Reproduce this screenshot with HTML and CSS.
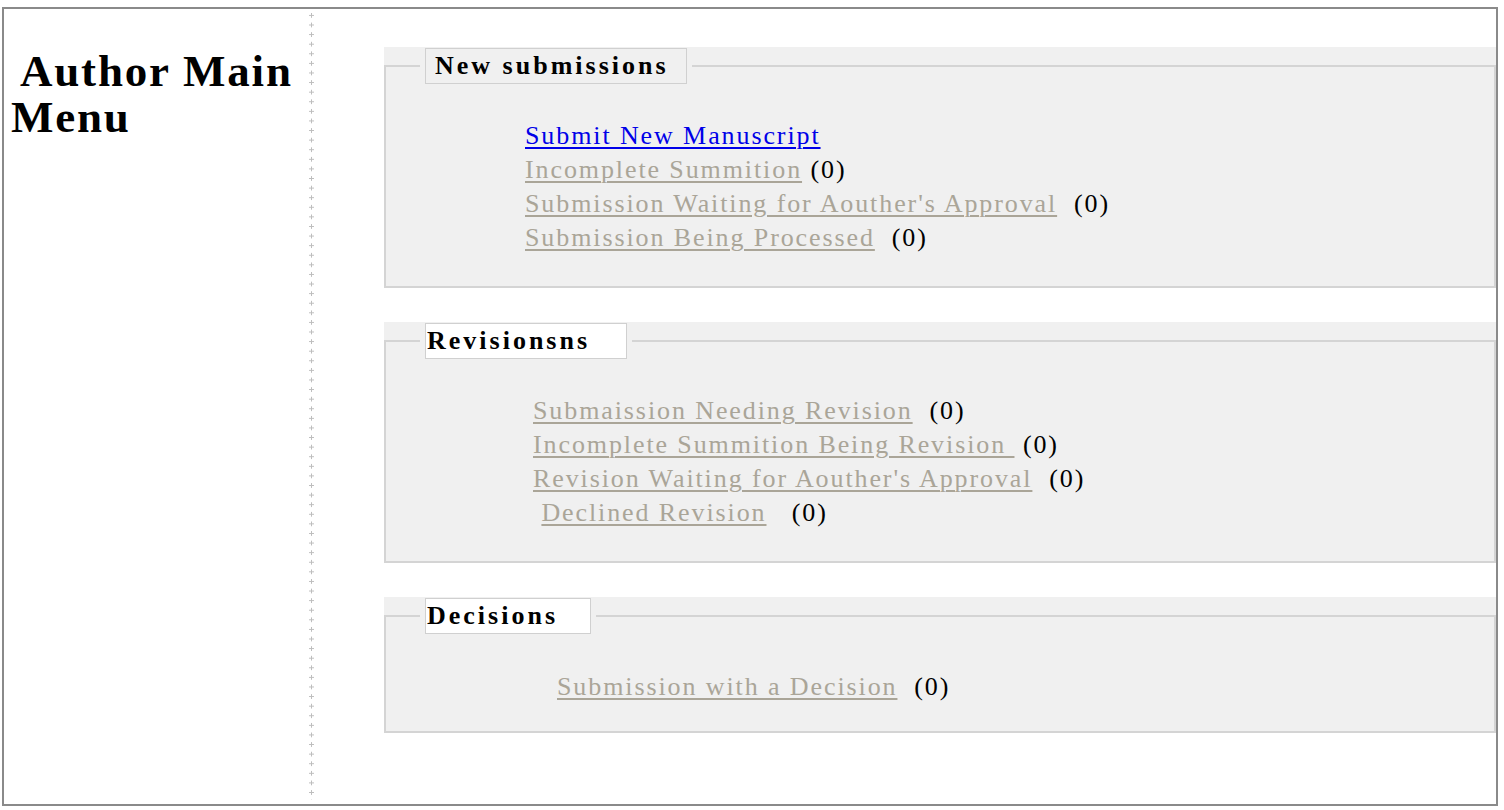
FILE: index.html
```html
<!DOCTYPE html>
<html lang="en">
<head>
<meta charset="utf-8">
<title>Author Main Menu</title>
<link rel="stylesheet" href="styles.css">
</head>
<body>
<div class="frame">
  <aside class="side">
    <h1 class="title"><span class="title-indent">Author Main</span><br>Menu</h1>
  </aside>
  <div class="divider"></div>
  <main class="main">
    <section class="group">
      <fieldset class="box">
        <legend class="legend"><span class="legend-label legend-label--first">New submissions</span></legend>
        <ul class="links links--new">
          <li><a class="link link--active" href="#">Submit New Manuscript</a></li>
          <li><a class="link" href="#">Incomplete Summition</a> <span class="count">(0)</span></li>
          <li><a class="link" href="#">Submission Waiting for Aouther's Approval</a>&nbsp; <span class="count">(0)</span></li>
          <li><a class="link" href="#">Submission Being Processed</a>&nbsp; <span class="count">(0)</span></li>
        </ul>
      </fieldset>
    </section>
    <section class="group">
      <fieldset class="box">
        <legend class="legend"><span class="legend-label legend-label--revisions">Revisionsns</span></legend>
        <ul class="links links--revisions">
          <li><a class="link" href="#">Submaission Needing Revision</a>&nbsp; <span class="count">(0)</span></li>
          <li><a class="link" href="#">Incomplete Summition Being Revision&nbsp;</a> <span class="count">(0)</span></li>
          <li><a class="link" href="#">Revision Waiting for Aouther's Approval</a>&nbsp; <span class="count">(0)</span></li>
          <li>&nbsp;<a class="link" href="#">Declined Revision</a>&nbsp;&nbsp; <span class="count">(0)</span></li>
        </ul>
      </fieldset>
    </section>
    <section class="group">
      <fieldset class="box box--short">
        <legend class="legend"><span class="legend-label legend-label--decisions">Decisions</span></legend>
        <ul class="links links--decisions">
          <li><a class="link" href="#">Submission with a Decision</a>&nbsp; <span class="count">(0)</span></li>
        </ul>
      </fieldset>
    </section>
  </main>
</div>
</body>
</html>
```
FILE: styles.css
```css
html, body {
  margin: 0;
  padding: 0;
  background: #ffffff;
}

body {
  font-family: "Liberation Serif", "Times New Roman", serif;
  color: #000000;
}

.frame {
  margin: 7px 6px 4px 2px;
  height: 795px;
  border: 2px solid #8a8a8a;
  display: grid;
  grid-template-columns: 305px 5px 1fr;
  background: #ffffff;
}

.side {
  padding: 39px 0 0 7px;
}

.title {
  margin: 0;
  font-size: 45px;
  line-height: 46px;
  font-weight: bold;
  letter-spacing: 1.8px;
  white-space: nowrap;
}

.title-indent {
  padding-left: 9px;
}

.divider {
  margin: 4px 0 4px 0;
  background-image:
    linear-gradient(to bottom, transparent 2px, #bdbdbd 2px, #bdbdbd 3px, transparent 3px),
    linear-gradient(to bottom, #bdbdbd 5px, transparent 5px);
  background-size: 5px 9.6px, 1px 9.6px;
  background-position: 0 0, 2px 0;
  background-repeat: repeat-y, repeat-y;
}

.main {
  padding: 38px 0 0 70px;
  display: flex;
  flex-direction: column;
  gap: 34px;
}

.group {
  background: #f0f0f0;
  padding-top: 1px;
}

.box {
  margin: 0;
  padding: 0 0 31px 0;
  border: 2px solid #d4d4d4;
  min-inline-size: 0;
}

.box--short {
  padding-bottom: 27px;
}

.legend {
  margin-left: 34px;
  padding: 0 5px;
}

.legend-label {
  display: block;
  box-sizing: border-box;
  height: 36px;
  border: 1px solid #d0d0d0;
  background: #ffffff;
  font-size: 26px;
  line-height: 34px;
  font-weight: bold;
  letter-spacing: 3px;
  padding-left: 1px;
  white-space: nowrap;
}

.legend-label--first {
  background: #f0f0f0;
  width: 262px;
  padding-left: 9px;
}

.legend-label--revisions {
  width: 202px;
}

.legend-label--decisions {
  width: 166px;
}

.links {
  list-style: none;
  margin: 35px 0 0 0;
  padding: 0;
  font-size: 26px;
  line-height: 34px;
  letter-spacing: 1.9px;
  white-space: nowrap;
}

.links--new {
  padding-left: 139px;
}

.links--revisions {
  padding-left: 147px;
}

.links--decisions {
  margin-top: 36px;
  padding-left: 171px;
}

.link {
  color: #aaa598;
  text-decoration: underline;
  text-decoration-color: #aaa598;
  text-decoration-thickness: 2px;
  text-underline-offset: 3px;
}

.link--active {
  color: #0000e8;
  text-decoration-color: #0000e8;
}

.count {
  color: #000000;
}
```
